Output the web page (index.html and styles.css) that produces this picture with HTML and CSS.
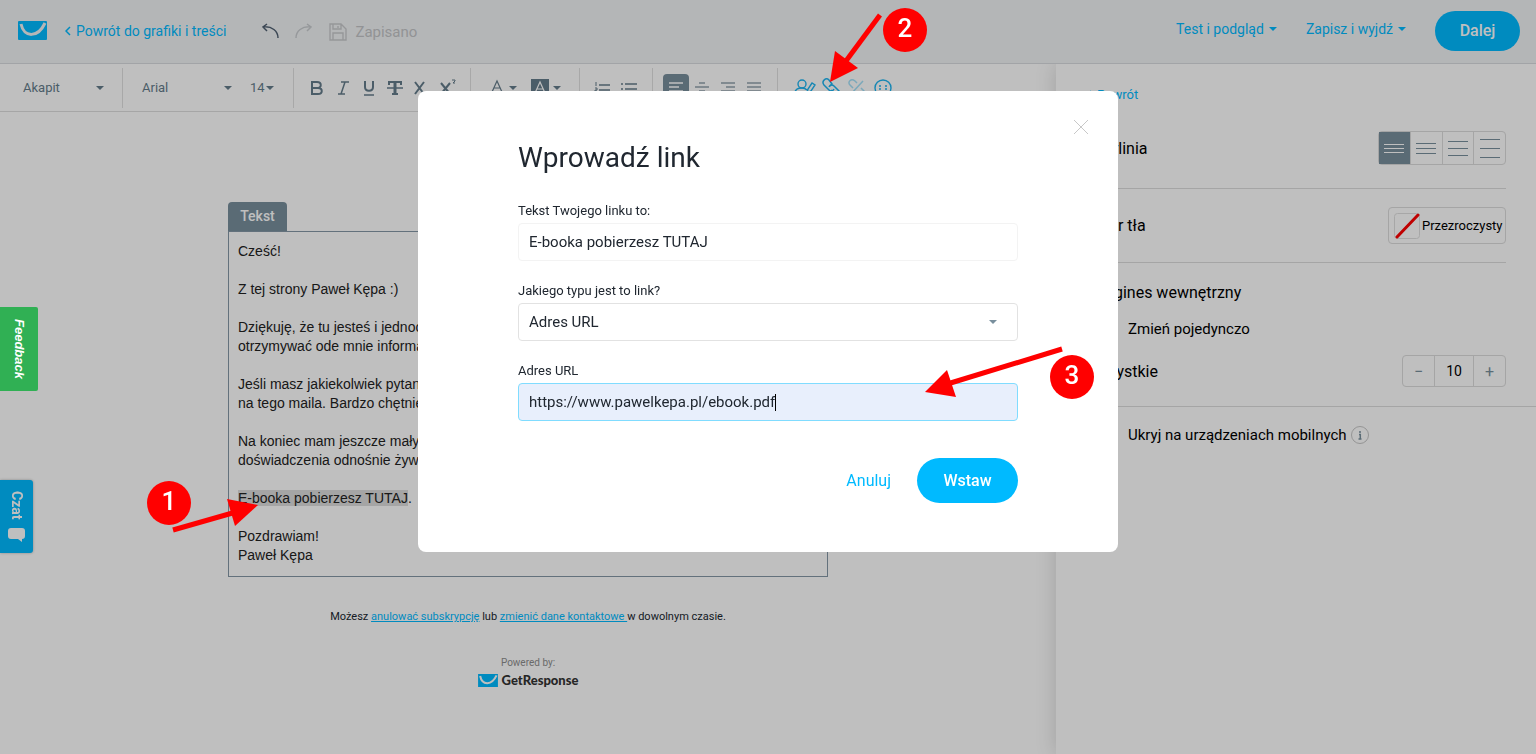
FILE: index.html
```html
<!DOCTYPE html>
<html lang="pl">
<head>
  <meta charset="UTF-8">
  <meta name="viewport" content="width=device-width, initial-scale=1.0">
  <title>Wprowadź link</title>
  <link rel="stylesheet" href="styles.css">
</head>
<body>

  <header class="topbar">
    <svg class="logo" width="29" height="19" viewBox="0 0 29 19"><rect width="29" height="19" rx="1" fill="#00baff"/><path d="M3 3C6 17 20 17 27 2" fill="none" stroke="#f1f3f5" stroke-width="3"/></svg>
    <a class="back" href="#">
      <svg width="6" height="10" viewBox="0 0 6 10"><path d="M5 1L1 5l4 4" fill="none" stroke="currentColor" stroke-width="1.5"/></svg>
      Powrót do grafiki i treści
    </a>
    <div class="history">
      <button aria-label="Cofnij"><svg width="18" height="18" viewBox="0 0 18 18"><path d="M5 2L1 5l4 4M1 5c9-1 15 4 15 11" fill="none" stroke="#4f5f70" stroke-width="1.5"/></svg></button>
      <button aria-label="Ponów"><svg width="18" height="18" viewBox="0 0 18 18"><path d="M13 2l4 3-4 4M17 5C8 4 2 9 2 16" fill="none" stroke="#c8cccf" stroke-width="1.5"/></svg></button>
    </div>
    <span class="saved">
      <svg width="18" height="18" viewBox="0 0 18 18" fill="none" stroke="#c8cacc" stroke-width="1.4"><path d="M1 1h11l5 5v11H1zM4 1v5h8V1M4 17v-7h10v7M9 3v2"/></svg>
      Zapisano
    </span>
    <div class="topbar-right">
      <button class="menu-btn">Test i podgląd <i class="caret"></i></button>
      <button class="menu-btn">Zapisz i wyjdź <i class="caret"></i></button>
      <button class="btn-primary next">Dalej</button>
    </div>
  </header>

  <div class="workspace">
    <main class="editor">
      <div class="toolbar">
        <div class="group group-style">
          <div class="picker"><select aria-label="Styl"><option>Akapit</option></select></div>
        </div>
        <div class="group group-font">
          <div class="picker picker-font"><select aria-label="Czcionka"><option>Arial</option></select></div>
          <div class="picker picker-size"><select aria-label="Rozmiar"><option>14</option></select></div>
        </div>
        <div class="group">
          <button class="tool" aria-label="Pogrubienie"><svg width="18" height="18" viewBox="0 0 18 18" fill="none" stroke="currentColor" stroke-width="2"><path d="M4 3h5c5 0 5 6 0 6H4zM4 9h6c5 0 5 6 0 6H4z"/></svg></button>
          <button class="tool" aria-label="Kursywa"><svg width="18" height="18" viewBox="0 0 18 18" fill="none" stroke="currentColor" stroke-width="1.5"><path d="M7 3h8M4 15h7M11 3L7 15"/></svg></button>
          <button class="tool" aria-label="Podkreślenie"><svg width="18" height="18" viewBox="0 0 18 18" fill="none" stroke="currentColor" stroke-width="2"><path d="M5 2v6c0 5 8 5 8 0V2"/><path d="M4 16h10" stroke-width="1.5"/></svg></button>
          <button class="tool" aria-label="Przekreślenie"><svg width="18" height="18" viewBox="0 0 18 18" fill="none" stroke="currentColor" stroke-width="2"><path d="M3 6V3h12v3M6 15h6"/><path d="M9 3v12" stroke-width="3"/><path d="M1 9h16" stroke-width="1.5"/></svg></button>
          <button class="tool" aria-label="Indeks dolny"><svg width="18" height="18" viewBox="0 0 18 18" fill="none" stroke="currentColor" stroke-width="2"><path d="M3 3l9 12M12 3L3 15"/></svg></button>
          <button class="tool" aria-label="Indeks górny"><svg width="18" height="18" viewBox="0 0 18 18" fill="none" stroke="currentColor"><path d="M3 4l9 11M12 4L3 15" stroke-width="2"/><path d="M14 1h3v1l-2 2h2"/></svg></button>
        </div>
        <div class="group group-color">
          <button class="color-btn" aria-label="Kolor tekstu"><svg width="16" height="18" viewBox="0 0 16 18" fill="none" stroke="currentColor" stroke-width="1.2"><path d="M3 13L8 2l5 11M5 9h6"/></svg><i class="caret"></i></button>
          <button class="color-btn" aria-label="Kolor wyróżnienia"><svg width="18" height="18" viewBox="0 0 18 18" fill="none"><rect width="18" height="18" fill="currentColor"/><path d="M4 14L9 3l5 11M6 10h6" stroke="#fff" stroke-width="1.2"/></svg><i class="caret"></i></button>
        </div>
        <div class="group">
          <button class="tool" aria-label="Lista numerowana"><svg width="18" height="18" viewBox="0 0 18 18" fill="none" stroke="currentColor"><path d="M5 6h11M5 11h11M5 16h11" stroke-width="1.4"/><path d="M2 3v4M1 9h2v2H1v1h2"/></svg></button>
          <button class="tool" aria-label="Lista punktowana"><svg width="18" height="18" viewBox="0 0 18 18" fill="none" stroke="currentColor" stroke-width="1.4"><path d="M5 5h12M5 10h12M5 15h12M1 5h2M1 10h2M1 15h2"/></svg></button>
        </div>
        <div class="group">
          <button class="tool active" aria-label="Do lewej"><svg width="18" height="18" viewBox="0 0 18 18" fill="none" stroke="currentColor" stroke-width="1.4"><path d="M2 4h14M2 8h10M2 12h14M2 16h10"/></svg></button>
          <button class="tool thin" aria-label="Do środka"><svg width="18" height="18" viewBox="0 0 18 18" fill="none" stroke="currentColor" stroke-width="1.4"><path d="M6 4h6M2 8h14M6 12h6M2 16h14"/></svg></button>
          <button class="tool thin" aria-label="Do prawej"><svg width="18" height="18" viewBox="0 0 18 18" fill="none" stroke="currentColor" stroke-width="1.4"><path d="M2 4h14M7 8h9M2 12h14M7 16h9"/></svg></button>
          <button class="tool thin" aria-label="Wyjustuj"><svg width="18" height="18" viewBox="0 0 18 18" fill="none" stroke="currentColor" stroke-width="1.4"><path d="M2 4h14M2 8h14M2 12h14M2 16h14"/></svg></button>
        </div>
        <div class="group group-insert">
          <button class="tool" aria-label="Personalizacja"><svg width="22" height="18" viewBox="0 0 22 18" fill="none" stroke="currentColor" stroke-width="1.4"><circle cx="8" cy="5" r="4"/><path d="M1 14c0-4 3-5 7-5 3 0 4 1 5 2M13 14l1-4 4-6 3 2-4 6z"/></svg></button>
          <button class="tool" aria-label="Wstaw link"><svg width="20" height="20" viewBox="0 0 20 20" fill="none" stroke="currentColor" stroke-width="1.5"><path d="M9 8l2-2-3-4C5-1 0 3 3 7l5 5c2 2 4 1 5-1"/><path d="M11 12l-2 2 3 4c4 3 9-1 6-5l-5-5c-2-2-4-1-5 1"/></svg></button>
          <button class="tool faded" aria-label="Usuń link"><svg width="20" height="20" viewBox="0 0 20 20" fill="none" stroke="currentColor" stroke-width="1.5"><path d="M10 5L8 3C4 0 0 4 3 7l3 3M10 15l2 2c4 3 8-1 5-4l-3-3M16 3L4 16"/></svg></button>
          <button class="tool" aria-label="Emotikona"><svg width="18" height="20" viewBox="0 0 18 20" fill="none" stroke="currentColor" stroke-width="1.4"><circle cx="9" cy="10" r="8"/><path d="M5 8h2M11 8h2M5 11h2M11 11h2M5 14c2 2 6 2 8 0"/></svg></button>
        </div>
      </div>

      <div class="canvas">
        <div class="block">
          <span class="block-tab">Tekst</span>
          <div class="block-body">
            <p>Cześć!</p>
            <p>Z tej strony Paweł Kępa :)</p>
            <p>Dziękuję, że tu jesteś i jednocześnie<br>otrzymywać ode mnie informacje</p>
            <p>Jeśli masz jakiekolwiek pytania<br>na tego maila. Bardzo chętnie</p>
            <p>Na koniec mam jeszcze mały<br>doświadczenia odnośnie żywienia</p>
            <p><mark>E-booka pobierzesz TUTAJ</mark>.</p>
            <p>Pozdrawiam!<br>Paweł Kępa</p>
          </div>
        </div>
        <p class="unsubscribe">Możesz <a href="#">anulować subskrypcję</a> lub <a href="#">zmienić dane kontaktowe </a>w dowolnym czasie.</p>
        <div class="powered">
          <span>Powered by:</span>
          <div class="brand">
            <svg width="20" height="13" viewBox="0 0 29 19"><rect width="29" height="19" fill="#00baff"/><path d="M3 3C6 17 20 17 27 2" fill="none" stroke="#fff" stroke-width="3"/></svg>
            GetResponse
          </div>
        </div>
      </div>
    </main>

    <aside class="panel">
      <a class="back panel-back" href="#">
        <svg width="6" height="10" viewBox="0 0 6 10"><path d="M5 1L1 5l4 4" fill="none" stroke="currentColor" stroke-width="1.5"/></svg>
        Powrót
      </a>
      <div class="row row-spacing">
        <span>Interlinia</span>
        <div class="spacing">
          <button class="active" aria-label="Ciasna"><svg width="22" height="30" viewBox="0 0 22 30" stroke="currentColor"><path d="M1 11.5h20M1 15.5h20M1 19.5h20"/></svg></button>
          <button aria-label="Normalna"><svg width="22" height="30" viewBox="0 0 22 30" stroke="currentColor"><path d="M1 10.5h20M1 15.5h20M1 20.5h20"/></svg></button>
          <button aria-label="Szeroka"><svg width="22" height="30" viewBox="0 0 22 30" stroke="currentColor"><path d="M1 8.5h20M1 15.5h20M1 22.5h20"/></svg></button>
          <button aria-label="Bardzo szeroka"><svg width="22" height="30" viewBox="0 0 22 30" stroke="currentColor"><path d="M1 6.5h20M1 15.5h20M1 24.5h20"/></svg></button>
        </div>
      </div>
      <div class="row row-bg">
        <span>Kolor tła</span>
        <button class="color-field">
          <svg width="26" height="26" viewBox="0 0 26 26"><rect x=".5" y=".5" width="25" height="25" rx="3" fill="none" stroke="#dfdfdf"/><path d="M3 24L24 2" stroke="#f00" stroke-width="3" stroke-linecap="round"/></svg>
          <span>Przezroczysty</span>
        </button>
      </div>
      <div class="margins">
        <h2>Margines wewnętrzny</h2>
        <label class="check"><input type="checkbox"> Zmień pojedynczo</label>
        <div class="row">
          <label for="margin">Wszystkie</label>
          <div class="stepper">
            <button aria-label="Mniej">−</button>
            <input id="margin" type="text" value="10">
            <button aria-label="Więcej">+</button>
          </div>
        </div>
      </div>
      <div class="mobile">
        <label class="check"><input type="checkbox"> Ukryj na urządzeniach mobilnych</label>
        <svg width="18" height="18" viewBox="0 0 18 18"><circle cx="9" cy="9" r="8.5" fill="none" stroke="#c6c6c6"/><path d="M9 5v2M8 8.5h1.3V13M7.5 13h3" stroke="#798f9d" stroke-width="1.5" fill="none"/></svg>
      </div>
    </aside>
  </div>

  <button class="chat">Czat
    <svg width="19" height="15" viewBox="0 0 19 15"><path d="M4 1h11c2 0 3 1 3 3v5c0 2-1 3-3 3v3l-4-3H4c-2 0-3-1-3-3V4c0-2 1-3 3-3z" fill="#fff"/></svg>
  </button>

  <div class="overlay">
    <form class="modal" role="dialog" aria-labelledby="modal-title">
      <button type="button" class="close" aria-label="Zamknij"><svg width="16" height="16" viewBox="0 0 16 16"><path d="M1 1l14 14M15 1L1 15" stroke="#c8c8c8"/></svg></button>
      <h1 id="modal-title">Wprowadź link</h1>
      <div class="field">
        <label for="link-text">Tekst Twojego linku to:</label>
        <input id="link-text" class="plain" type="text" value="E-booka pobierzesz TUTAJ">
      </div>
      <div class="field">
        <label for="link-type">Jakiego typu jest to link?</label>
        <div class="select">
          <select id="link-type"><option>Adres URL</option></select>
          <i class="caret"></i>
        </div>
      </div>
      <div class="field">
        <label for="link-url">Adres URL</label>
        <div class="select">
          <input id="link-url" class="focused" type="text" value="https://www.pawelkepa.pl/ebook.pdf">
          <i class="text-cursor"></i>
        </div>
      </div>
      <div class="actions">
        <button type="button" class="btn-link">Anuluj</button>
        <button type="button" class="btn-primary insert">Wstaw</button>
      </div>
      <svg class="hint hint-3" width="172" height="54" viewBox="0 0 172 54">
        <path d="M140 3L22 39" stroke="#f00" stroke-width="5"/><path d="M3 46L25 24l9 27z" fill="#f00"/>
        <circle cx="150" cy="31" r="22" fill="#f00"/><text x="150" y="38">3</text>
      </svg>
    </form>
  </div>

  <button class="feedback">Feedback</button>

  <svg class="hint hint-1" width="114" height="54" viewBox="0 0 114 54">
    <circle cx="23" cy="23" r="22" fill="#f00"/><text x="23" y="30">1</text>
    <path d="M27 50L90 32" stroke="#f00" stroke-width="5"/><path d="M112 25L81 19l8 27z" fill="#f00"/>
  </svg>
  <svg class="hint hint-2" width="100" height="78" viewBox="0 0 100 78">
    <path d="M51 9L14 59" stroke="#f00" stroke-width="5"/><path d="M1 76L6 45l23 17z" fill="#f00"/>
    <circle cx="76" cy="24" r="22" fill="#f00"/><text x="76" y="31">2</text>
  </svg>

</body>
</html>
```

FILE: styles.css
```css
* {
  box-sizing: border-box;
}

body {
  margin: 0;
  min-height: 100vh;
  display: flex;
  flex-direction: column;
  font-family: Roboto, sans-serif;
  font-size: 14px;
  color: #202730;
  background: #fff;
}

button,
input,
select {
  font-family: inherit;
  font-size: inherit;
  color: inherit;
}

button {
  display: flex;
  align-items: center;
  justify-content: center;
  padding: 0;
  border: 0;
  background: none;
  cursor: pointer;
}

select {
  appearance: none;
  border: 0;
  background: none;
}

p,
h1,
h2 {
  margin: 0;
}

svg {
  display: block;
  flex: none;
}

a {
  color: #00baff;
}

.caret {
  flex: none;
  border: 4px solid transparent;
  border-top-color: currentColor;
  border-bottom: 0;
}

.btn-primary {
  border-radius: 23px;
  background: #00baff;
  color: #fff;
  font-size: 16px;
  font-weight: 500;
}

/* top bar */

.topbar {
  display: flex;
  align-items: center;
  height: 64px;
  padding: 0 16px 2px 18px;
  background: #f1f3f5;
  border-bottom: 1px solid #d8dbdf;
}

.back {
  display: flex;
  align-items: center;
  gap: 5px;
  text-decoration: none;
}

.topbar .back {
  margin-left: 18px;
}

.history {
  display: flex;
  gap: 14px;
  margin-left: 36px;
}

.saved {
  display: flex;
  align-items: center;
  gap: 8px;
  margin-left: 17px;
  padding-top: 2px;
  font-size: 15px;
  color: #c3c5c7;
}

.topbar-right {
  display: flex;
  align-items: center;
  gap: 29px;
  margin-left: auto;
}

.menu-btn {
  gap: 5px;
  padding-bottom: 3px;
  color: #00baff;
}

.next {
  width: 85px;
  height: 40px;
}

/* editor */

.workspace {
  display: flex;
  flex: 1;
}

.editor {
  flex: 1;
  min-width: 0;
}

.toolbar {
  display: flex;
  align-items: center;
  height: 48px;
  border-bottom: 1px solid #dedede;
  color: #657c8b;
}

.group {
  display: flex;
  align-items: center;
  flex: none;
  height: 40px;
  padding: 0 10px;
  border-right: 1px solid #e0e0e0;
}

.group-style {
  width: 123px;
  padding: 0 18px 0 23px;
}

.group-font {
  width: 171px;
  gap: 18px;
  padding: 0 19px;
}

.group-color {
  gap: 14px;
  padding: 0 18px;
}

.group-insert {
  padding: 0 14px;
  border: 0;
  color: #1eb4f0;
}

.picker {
  flex: 1;
  display: flex;
  align-items: center;
  font-size: 13px;
}

.picker::after {
  content: "";
  border: 4px solid transparent;
  border-top-color: #657c8b;
  border-bottom: 0;
}

.picker select {
  flex: 1;
  min-width: 0;
  padding: 0;
}

.picker-size {
  flex: none;
  width: 24px;
}

.tool {
  width: 26px;
  height: 28px;
}

.tool.active {
  border-radius: 4px;
  background: #798f9d;
  color: #fff;
}

.thin {
  opacity: .7;
}

.faded {
  opacity: .4;
}

.color-btn {
  gap: 4px;
  height: 28px;
}

.canvas {
  display: flex;
  flex-direction: column;
  align-items: center;
  padding: 90px 20px 60px;
}

.block {
  width: 100%;
  max-width: 600px;
}

.block-tab {
  display: block;
  width: 59px;
  border-radius: 4px 4px 0 0;
  background: #798f9d;
  color: #fff;
  font-weight: 500;
  line-height: 29px;
  text-align: center;
}

.block-body {
  display: flex;
  flex-direction: column;
  gap: 19px;
  padding: 10px 9px 11px;
  border: 1px solid #8497a6;
  color: #222;
  font-family: "Liberation Sans", sans-serif;
  font-size: 14px;
  line-height: 19px;
}

mark {
  background: #dcdcdc;
  color: inherit;
}

.unsubscribe {
  margin-top: 32px;
  font-size: 11px;
  line-height: 16px;
}

.powered {
  margin-top: 30px;
  color: #8e8e8e;
  font-size: 10px;
  line-height: 16px;
  text-align: center;
}

.brand {
  display: flex;
  align-items: center;
  gap: 4px;
  color: #333;
  font-family: Lato, sans-serif;
  font-size: 13px;
  font-weight: 900;
  line-height: 18px;
}

/* side panel */

.panel {
  flex: none;
  width: 480px;
  padding-top: 22px;
  background: #fff;
  box-shadow: 0 0 20px rgba(0, 0, 0, .16);
  clip-path: inset(0 0 0 -40px);
  color: #000;
  font-size: 16px;
}

.panel-back {
  margin-left: 30px;
  font-size: 13px;
  line-height: 17px;
}

.row {
  display: flex;
  align-items: center;
  justify-content: space-between;
}

.row-spacing,
.row-bg {
  margin: 0 30px;
  border-bottom: 1px solid #dcdcdc;
}

.row-spacing {
  height: 86px;
  padding-top: 5px;
}

.row-bg {
  height: 74px;
}

.spacing {
  display: flex;
  width: 128px;
  border: 1px solid #dcdcdc;
  border-radius: 4px;
}

.spacing button {
  flex: 1;
  height: 32px;
  color: #798f9d;
}

.spacing button + button {
  border-left: 1px solid #dcdcdc;
}

.spacing .active {
  background: #798f9d;
  color: #fff;
}

.color-field {
  justify-content: flex-start;
  gap: 2px;
  width: 118px;
  height: 37px;
  padding: 0 4px 0 5px;
  border: 1px solid #dcdcdc;
  border-radius: 4px;
  font-size: 13px;
}

.margins {
  padding: 20px 30px 19px;
  border-bottom: 1px solid #dcdcdc;
}

.margins h2 {
  font-size: 16px;
  font-weight: normal;
  line-height: 20px;
}

.check {
  display: flex;
  align-items: center;
  gap: 24px;
  font-size: 15px;
  line-height: 20px;
}

.check input {
  width: 18px;
  height: 18px;
  margin: 0;
}

.margins .check {
  margin: 16px 0;
}

.stepper {
  display: flex;
  width: 104px;
  height: 32px;
  border: 1px solid #dcdcdc;
  border-radius: 4px;
}

.stepper button {
  width: 31px;
  color: #798f9d;
}

.stepper input {
  flex: 1;
  min-width: 0;
  padding: 0;
  border: solid #dcdcdc;
  border-width: 0 1px;
  background: none;
  font-size: 14px;
  text-align: center;
}

.mobile {
  display: flex;
  align-items: center;
  gap: 4px;
  padding: 18px 30px;
}

/* floating buttons */

.chat,
.feedback {
  position: fixed;
  left: 0;
  writing-mode: vertical-rl;
  color: #fff;
}

.chat {
  top: 480px;
  gap: 7px;
  width: 33px;
  height: 73px;
  border-radius: 0 3px 3px 0;
  background: #00baff;
  box-shadow: 0 0 3px rgba(0, 0, 0, .3);
  font-size: 14px;
  font-weight: bold;
}

.feedback {
  top: 307px;
  width: 38px;
  height: 84px;
  border-radius: 0 2px 2px 0;
  background: #30b054;
  font-family: "Liberation Sans", sans-serif;
  font-size: 13px;
  font-style: italic;
  font-weight: bold;
}

/* modal */

.overlay {
  position: fixed;
  inset: 0;
  display: flex;
  align-items: flex-start;
  justify-content: center;
  padding-top: 91px;
  background: rgba(0, 0, 0, .25);
}

.modal {
  position: relative;
  width: 700px;
  padding: 51px 100px 49px;
  border-radius: 8px;
  background: #fff;
}

.modal h1 {
  margin-bottom: 29px;
  font-size: 28px;
  font-weight: normal;
  line-height: 32px;
}

.close {
  position: absolute;
  top: 28px;
  right: 29px;
}

.field {
  margin-bottom: 22px;
}

.field label {
  display: block;
  margin-bottom: 4px;
  font-size: 13px;
  line-height: 16px;
}

.field input,
.field select {
  display: block;
  width: 100%;
  height: 38px;
  padding: 0 10px;
  border: 1px solid #e2e2e2;
  border-radius: 4px;
  background: #fff;
  font-size: 15px;
}

.field .plain {
  border-color: #f3f3f3;
}

.field .focused {
  border-color: #80dcff;
  background: #e8effc;
}

.select {
  position: relative;
}

.select .caret {
  position: absolute;
  top: 17px;
  right: 21px;
  color: #798f9d;
}

.text-cursor {
  position: absolute;
  top: 11px;
  left: 257px;
  width: 1px;
  height: 17px;
  background: #000;
}

.actions {
  display: flex;
  justify-content: flex-end;
  gap: 26px;
  margin-top: 37px;
}

.btn-link {
  color: #00baff;
  font-size: 16px;
}

.insert {
  width: 101px;
  height: 45px;
}

/* numbered arrows */

.hint {
  position: absolute;
  pointer-events: none;
}

.hint text {
  fill: #fff;
  font-size: 26px;
  font-weight: 500;
  text-anchor: middle;
}

.hint-1 {
  top: 480px;
  left: 146px;
}

.hint-2 {
  top: 6px;
  left: 829px;
}

.hint-3 {
  top: 255px;
  left: 504px;
}
```
